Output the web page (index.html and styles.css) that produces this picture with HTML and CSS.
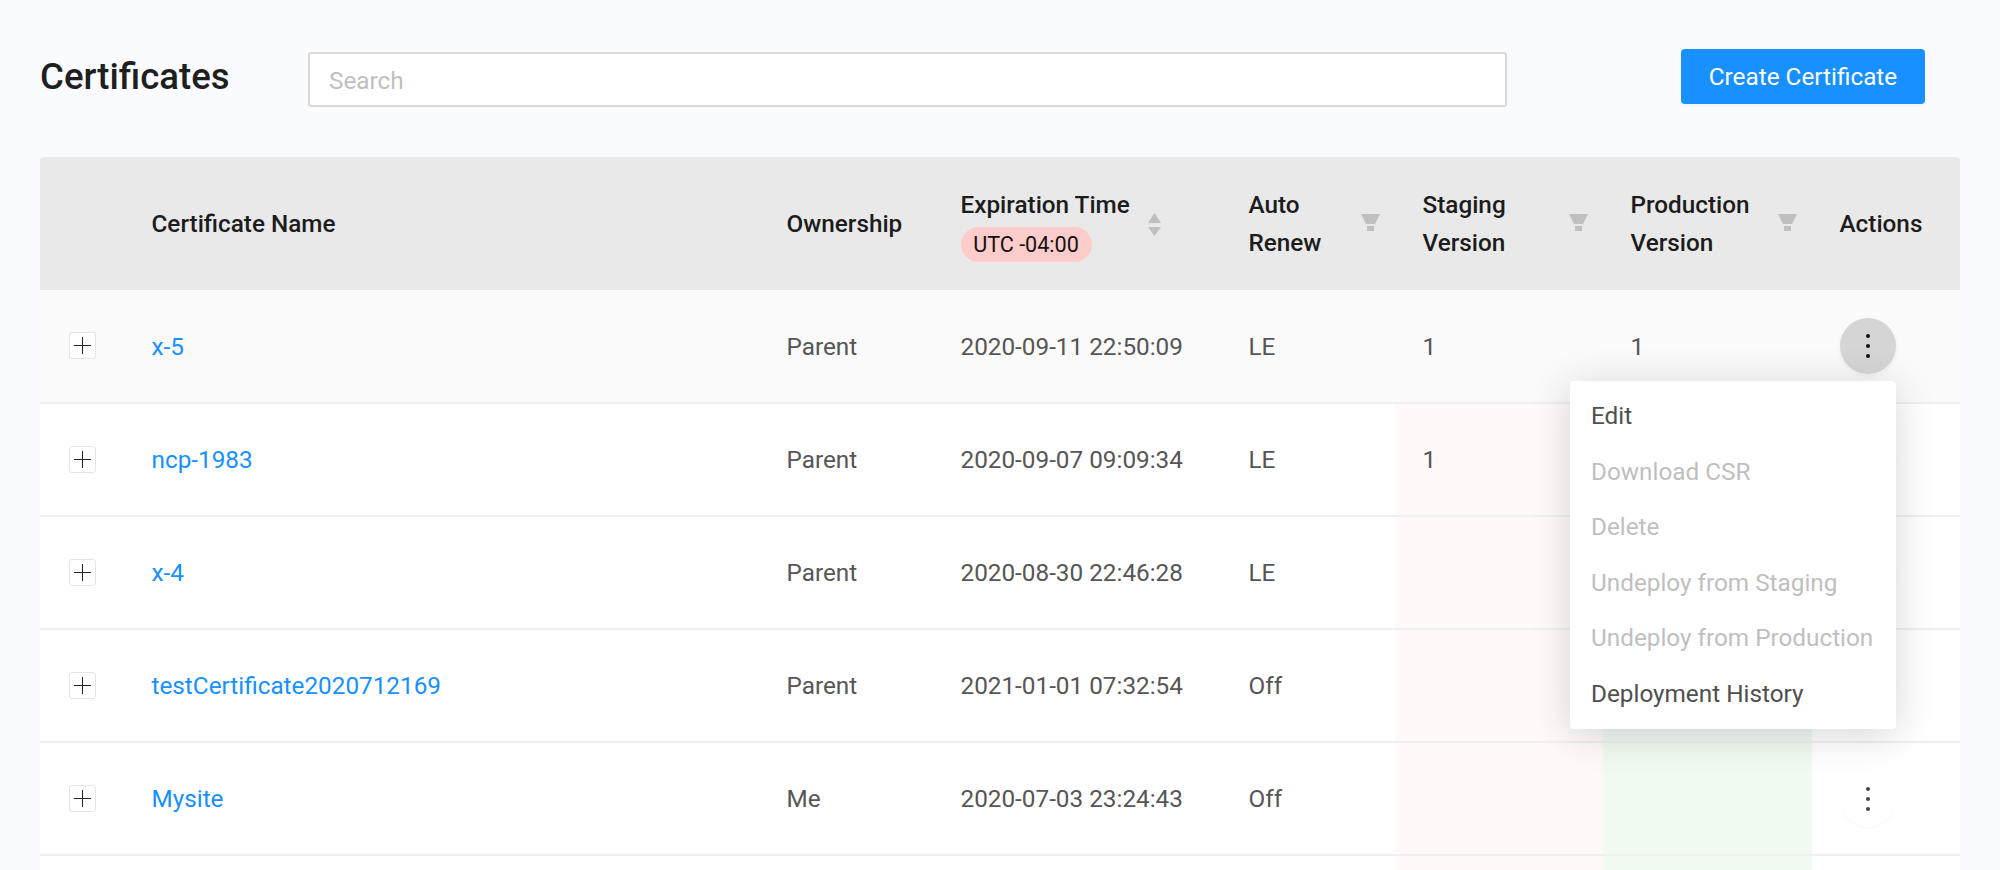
FILE: index.html
```html
<!DOCTYPE html>
<html lang="en">
<head>
    <meta charset="UTF-8">
    <meta name="viewport" content="width=device-width, initial-scale=1.0">
    <title>Certificates</title>
    <link rel="stylesheet" href="styles.css">
</head>
<body>
  <div class="page">
    <div class="page-header">
      <h1 class="page-title">Certificates</h1>
      <input class="search-input" type="text" placeholder="Search">
      <button class="create-btn">Create Certificate</button>
    </div>

    <table class="cert-table">
      <colgroup>
        <col class="col-expand">
        <col class="col-name">
        <col class="col-owner">
        <col class="col-expiry">
        <col class="col-renew">
        <col class="col-staging">
        <col class="col-production">
        <col class="col-actions">
      </colgroup>
      <thead>
        <tr>
          <th></th>
          <th>Certificate Name</th>
          <th>Ownership</th>
          <th>
            <div class="th-sort">
              <div>
                <div>Expiration Time</div>
                <span class="utc-badge">UTC -04:00</span>
              </div>
              <svg class="sort-icon" width="13" height="23" viewBox="0 0 13 23"><polygon points="6.5,0 13,10 0,10"/><polygon points="0,14 13,14 6.5,23"/></svg>
            </div>
          </th>
          <th>
            <div class="th-filter">
              <span>Auto<br>Renew</span>
              <svg class="filter-icon" width="19" height="17" viewBox="0 0 19 17"><polygon points="0,0 19,0 14,10 5,10"/><rect x="6" y="12" width="7" height="5"/></svg>
            </div>
          </th>
          <th>
            <div class="th-filter">
              <span>Staging<br>Version</span>
              <svg class="filter-icon" width="19" height="17" viewBox="0 0 19 17"><polygon points="0,0 19,0 14,10 5,10"/><rect x="6" y="12" width="7" height="5"/></svg>
            </div>
          </th>
          <th>
            <div class="th-filter">
              <span>Production<br>Version</span>
              <svg class="filter-icon" width="19" height="17" viewBox="0 0 19 17"><polygon points="0,0 19,0 14,10 5,10"/><rect x="6" y="12" width="7" height="5"/></svg>
            </div>
          </th>
          <th>Actions</th>
        </tr>
      </thead>
      <tbody>
        <tr class="row-hover">
          <td><span class="expand-btn"></span></td>
          <td><a class="cert-link" href="#">x-5</a></td>
          <td>Parent</td>
          <td>2020-09-11 22:50:09</td>
          <td>LE</td>
          <td>1</td>
          <td>1</td>
          <td class="actions-cell">
            <button class="more-btn active"><i></i><i></i><i></i></button>
            <ul class="action-menu">
              <li>Edit</li>
              <li class="disabled">Download CSR</li>
              <li class="disabled">Delete</li>
              <li class="disabled">Undeploy from Staging</li>
              <li class="disabled">Undeploy from Production</li>
              <li>Deployment History</li>
            </ul>
          </td>
        </tr>
        <tr>
          <td><span class="expand-btn"></span></td>
          <td><a class="cert-link" href="#">ncp-1983</a></td>
          <td>Parent</td>
          <td>2020-09-07 09:09:34</td>
          <td>LE</td>
          <td class="tint-red">1</td>
          <td class="tint-green"></td>
          <td><button class="more-btn"><i></i><i></i><i></i></button></td>
        </tr>
        <tr>
          <td><span class="expand-btn"></span></td>
          <td><a class="cert-link" href="#">x-4</a></td>
          <td>Parent</td>
          <td>2020-08-30 22:46:28</td>
          <td>LE</td>
          <td class="tint-red"></td>
          <td class="tint-green"></td>
          <td><button class="more-btn"><i></i><i></i><i></i></button></td>
        </tr>
        <tr>
          <td><span class="expand-btn"></span></td>
          <td><a class="cert-link" href="#">testCertificate2020712169</a></td>
          <td>Parent</td>
          <td>2021-01-01 07:32:54</td>
          <td>Off</td>
          <td class="tint-red"></td>
          <td class="tint-green"></td>
          <td><button class="more-btn"><i></i><i></i><i></i></button></td>
        </tr>
        <tr>
          <td><span class="expand-btn"></span></td>
          <td><a class="cert-link" href="#">Mysite</a></td>
          <td>Me</td>
          <td>2020-07-03 23:24:43</td>
          <td>Off</td>
          <td class="tint-red"></td>
          <td class="tint-green"></td>
          <td><button class="more-btn"><i></i><i></i><i></i></button></td>
        </tr>
        <tr>
          <td></td>
          <td></td>
          <td></td>
          <td></td>
          <td></td>
          <td class="tint-red"></td>
          <td class="tint-green"></td>
          <td></td>
        </tr>
      </tbody>
    </table>
  </div>
</body>
</html>
```

FILE: styles.css
```css
html, body {
  margin: 0;
  height: 100%;
  overflow: hidden;
}
body {
  background-color: #f9fbff;
  font-family: Roboto, "Liberation Sans", sans-serif;
  font-size: 24.3px;
  color: #565656;
}
.page {
  height: 100%;
  overflow: hidden;
  padding: 49px 40px 0;
  box-sizing: border-box;
}
.page-header {
  display: flex;
  align-items: flex-start;
  padding-right: 35px;
  margin-bottom: 50px;
}
.page-title {
  width: 268px;
  margin: 0;
  font-size: 36.6px;
  font-weight: 500;
  line-height: 55px;
  color: #1f1f1f;
}
.search-input {
  flex: 1;
  box-sizing: border-box;
  height: 55px;
  margin: 3px 174px 0 0;
  padding: 1px 19px 0;
  border: 2px solid #d9d9d9;
  border-radius: 3px;
  background: #fff;
  font-family: inherit;
  font-size: 24.3px;
  outline: none;
}
.search-input::placeholder {
  color: #bfbfbf;
}
.create-btn {
  width: 244px;
  height: 55px;
  padding: 0;
  border: none;
  border-radius: 4px;
  background-color: #1890ff;
  box-shadow: 0 3px 0 rgba(0,0,0,0.02);
  color: #fff;
  font-family: inherit;
  font-size: 24.3px;
}

.cert-table {
  width: 1920px;
  table-layout: fixed;
  border-collapse: separate;
  border-spacing: 0;
}
.col-expand { width: 84px; }
.col-name { width: 635px; }
.col-owner { width: 174px; }
.col-expiry { width: 288px; }
.col-renew { width: 174px; }
.col-staging { width: 208px; }
.col-production { width: 209px; }
.col-actions { width: 148px; }

.cert-table th {
  height: 133px;
  box-sizing: border-box;
  padding: 0 15px 0 27.5px;
  background-color: #e9e9e9;
  color: #1c1c1c;
  font-weight: 500;
  line-height: 38px;
  text-align: left;
}
.cert-table th:first-child { border-top-left-radius: 4px; }
.cert-table th:last-child { border-top-right-radius: 4px; padding-right: 0; }
.cert-table td {
  height: 113px;
  box-sizing: border-box;
  padding: 0 0 0 27.5px;
  background-color: #fff;
  border-bottom: 2px solid #f0f0f0;
}
.cert-table td:first-child {
  padding-left: 29px;
}
.cert-table .row-hover td {
  height: 114px;
  background-color: #fafafa;
}
.cert-table td.tint-red {
  background-color: #fff9f9;
}
.cert-table td.tint-green {
  background-color: #f0faf1;
}
.cert-link {
  color: #1890ff;
  text-decoration: none;
}

.th-sort {
  display: flex;
  align-items: center;
}
.th-filter {
  display: flex;
  align-items: center;
  justify-content: space-between;
}
.utc-badge {
  display: block;
  width: 131px;
  height: 35px;
  margin-top: 3px;
  border-radius: 18px;
  background-color: #ffcccc;
  color: #111;
  font-size: 21.6px;
  font-weight: 400;
  line-height: 35px;
  text-align: center;
}
.sort-icon {
  margin: 2px 0 0 18px;
  fill: #bfbfbf;
}
.filter-icon {
  margin-top: -2px;
  fill: #bfbfbf;
}

.expand-btn {
  display: block;
  position: relative;
  width: 27px;
  height: 27px;
  box-sizing: border-box;
  margin-top: -1px;
  border: 1px solid #e4e4e4;
  border-radius: 3px;
  background-color: #fff;
}
.expand-btn::before,
.expand-btn::after {
  content: "";
  position: absolute;
  background-color: #222;
}
.expand-btn::before {
  left: 4px;
  right: 4px;
  top: 12px;
  height: 1px;
}
.expand-btn::after {
  top: 4px;
  bottom: 4px;
  left: 12px;
  width: 1px;
}

.more-btn {
  display: flex;
  flex-direction: column;
  align-items: center;
  justify-content: center;
  gap: 6px;
  width: 56px;
  height: 56px;
  padding: 0;
  border: none;
  border-radius: 50%;
  background-color: #fff;
  box-shadow: 0 2px 2px rgba(0,0,0,0.02);
}
.more-btn i {
  width: 4px;
  height: 4px;
  border-radius: 50%;
  background-color: #444;
}
.more-btn.active {
  background-color: #d5d5d5;
  box-shadow: 0 2px 4px rgba(0,0,0,0.05);
}
.more-btn.active i {
  background-color: #111;
}

.actions-cell {
  position: relative;
}
.action-menu {
  position: absolute;
  z-index: 5;
  top: 91px;
  right: 64px;
  width: 326px;
  box-sizing: border-box;
  margin: 0;
  padding: 7px 0;
  list-style: none;
  border-radius: 4px;
  background-color: #fff;
  box-shadow: 0 6px 40px rgba(0,0,0,0.16);
}
.action-menu li {
  height: 55.6px;
  padding-left: 21px;
  line-height: 55.6px;
  color: #4f4f4f;
  white-space: nowrap;
}
.action-menu li.disabled {
  color: #bfbfbf;
}
```
